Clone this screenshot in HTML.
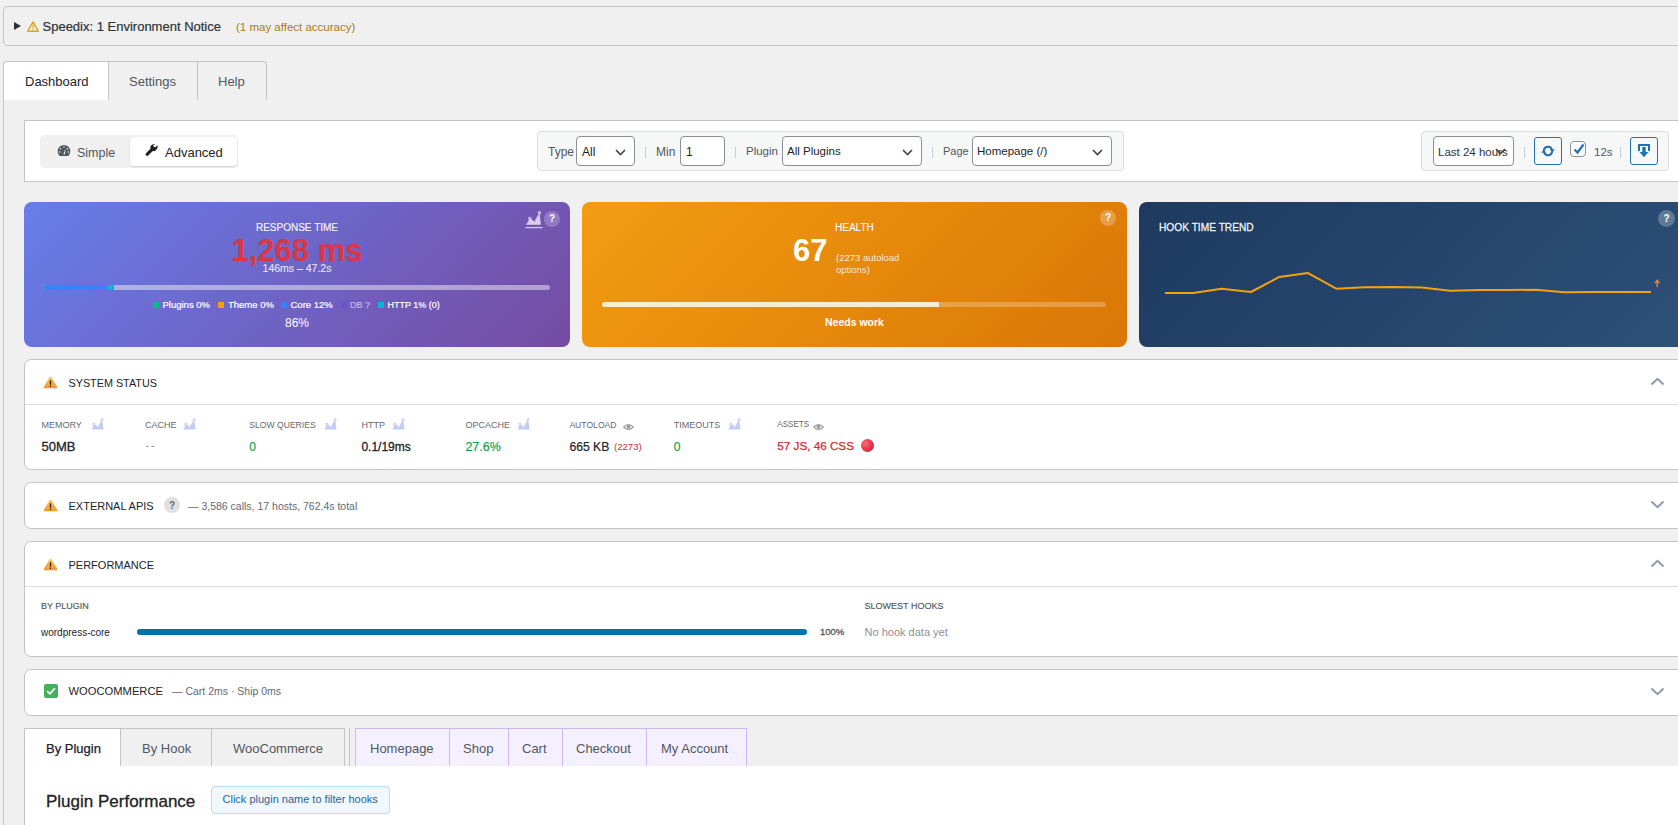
<!DOCTYPE html>
<html><head><meta charset="utf-8">
<style>
*{box-sizing:border-box}
html,body{margin:0;padding:0}
body{width:1678px;height:825px;overflow:hidden;position:relative;background:#f0f0f1;font-family:"Liberation Sans",sans-serif;color:#1d2327}
.a{position:absolute}
.t{position:absolute;white-space:nowrap;line-height:1}
/* notice */
#notice{left:3px;top:6px;width:1720px;height:40px;border:1px solid #c3c4c7;border-radius:4px}
/* tabs */
.tab{position:absolute;top:61px;height:39px;border-top:1px solid #c3c4c7;border-right:1px solid #c3c4c7;background:#f0f0f1}
/* panel */
#panel{left:24px;top:120px;width:1662px;height:62px;background:#fff;border:1px solid #c3c4c7}
.sel{position:absolute;background:#fff;border:1px solid #8c8f94;border-radius:4px}
.sep{position:absolute;width:1px;height:11px;background:#c9cedf}
.lbl{color:#50575e}
.card{position:absolute;top:202px;height:145px;width:546px;border-radius:8px;overflow:hidden}
.sec{position:absolute;left:24px;width:1662px;background:#fff;border:1px solid #c3c4c7;border-radius:7px}
.mlab{position:absolute;top:420px;font-size:9px;color:#646970;white-space:nowrap;line-height:1}
.mval{position:absolute;top:440px;font-size:12px;white-space:nowrap;line-height:1}
</style></head>
<body>

<!-- Notice -->
<div id="notice" class="a"></div>
<div class="a" style="left:14px;top:22px;width:0;height:0;border-left:7.5px solid #2c3338;border-top:4.5px solid transparent;border-bottom:4.5px solid transparent"></div>
<svg class="a" style="left:27px;top:21px" width="12" height="11" viewBox="0 0 12 11"><path d="M6 0.9 L11.2 10.2 L0.8 10.2 Z" fill="none" stroke="#dba617" stroke-width="1.4" stroke-linejoin="round"/><rect x="5.4" y="3.6" width="1.2" height="3.8" fill="#dba617"/><rect x="5.4" y="8.1" width="1.2" height="1.1" fill="#dba617"/></svg>
<div class="t" style="left:42.5px;top:20.3px;font-size:13px;-webkit-text-stroke:0.2px currentColor;color:#2c3338">Speedix: 1 Environment Notice</div>
<div class="t" style="left:236px;top:22px;font-size:11.5px;color:#a97b14">(1 may affect accuracy)</div>

<!-- Tabs -->
<div class="tab" style="left:3px;width:106px;background:#fff;border-left:1px solid #c3c4c7;border-top-left-radius:4px"></div>
<div class="tab" style="left:109px;width:89px"></div>
<div class="tab" style="left:198px;width:69px;border-top-right-radius:4px"></div>
<div class="t" style="left:25px;top:75px;font-size:13px;color:#1d2327">Dashboard</div>
<div class="t" style="left:129px;top:75px;font-size:13px;color:#50575e">Settings</div>
<div class="t" style="left:218px;top:75px;font-size:13px;color:#50575e">Help</div>
<div class="a" style="left:3px;top:100px;width:1px;height:725px;background:#c3c4c7"></div>

<!-- Filter panel -->
<div id="panel" class="a"></div>
<div class="a" style="left:40px;top:135px;width:198px;height:33px;background:#f0f0f1;border-radius:5px"></div>
<div class="a" style="left:130px;top:137px;width:107px;height:29px;background:#fff;border-radius:4px;box-shadow:0 1px 2px rgba(0,0,0,.12)"></div>
<svg class="a" style="left:57px;top:144px" width="14" height="13" viewBox="0 0 20 18"><path d="M10 1a9 9 0 0 0-9 9c0 2.7 1.2 5.2 3.1 6.8h11.8A9 9 0 0 0 19 10a9 9 0 0 0-9-9z" fill="#50575e"/><circle cx="10" cy="4" r="1.1" fill="#f0f0f1"/><circle cx="5" cy="6.5" r="1.1" fill="#f0f0f1"/><circle cx="15" cy="6.5" r="1.1" fill="#f0f0f1"/><circle cx="3.8" cy="11" r="1.1" fill="#f0f0f1"/><circle cx="16.2" cy="11" r="1.1" fill="#f0f0f1"/><path d="M9 14.5 L12.5 6 L11.2 14.8 Z" fill="#f0f0f1"/></svg>
<div class="t" style="left:77px;top:147px;font-size:12.5px;color:#50575e">Simple</div>
<svg class="a" style="left:145px;top:144px" width="14" height="14" viewBox="0 0 20 20"><path d="M16.7 7.4c1.5-1.5 1.8-3.7 1-5.5l-2.8 2.8-2.4-.7-.7-2.4L14.6.9c-1.8-.8-4-.5-5.5 1-1.3 1.3-1.7 3.2-1.3 4.9L1.4 13.2a2 2 0 0 0 0 2.8l.5.5a2 2 0 0 0 2.8 0l6.4-6.4c1.7.5 3.7.1 5.6-2.7z" fill="#1d2327"/></svg>
<div class="t" style="left:165px;top:146px;font-size:13px;color:#1d2327">Advanced</div>

<!-- middle filter group -->
<div class="a" style="left:537px;top:131px;width:587px;height:40px;background:#f6f7f7;border:1px solid #dcdcde;border-radius:4px"></div>
<div class="t lbl" style="left:548px;top:146px;font-size:12px">Type</div>
<div class="sel" style="left:576px;top:136px;width:59px;height:30px"></div>
<div class="t" style="left:582px;top:146px;font-size:12px">All</div>
<svg class="a" style="left:615px;top:148.5px" width="11" height="7" viewBox="0 0 11 7"><path d="M1 1 L5.5 5.5 L10 1" fill="none" stroke="#3c434a" stroke-width="1.6"/></svg>
<div class="sep" style="left:645px;top:147px"></div>
<div class="t lbl" style="left:656px;top:146px;font-size:12px">Min</div>
<div class="sel" style="left:680px;top:136px;width:45px;height:30px"></div>
<div class="t" style="left:686px;top:146px;font-size:12px">1</div>
<div class="sep" style="left:735px;top:147px"></div>
<div class="t lbl" style="left:746px;top:146px;font-size:11.5px">Plugin</div>
<div class="sel" style="left:782px;top:136px;width:140px;height:30px"></div>
<div class="t" style="left:787px;top:146px;font-size:11.5px">All Plugins</div>
<svg class="a" style="left:902px;top:148.5px" width="11" height="7" viewBox="0 0 11 7"><path d="M1 1 L5.5 5.5 L10 1" fill="none" stroke="#3c434a" stroke-width="1.6"/></svg>
<div class="sep" style="left:932px;top:147px"></div>
<div class="t lbl" style="left:943px;top:146px;font-size:11px">Page</div>
<div class="sel" style="left:972px;top:136px;width:140px;height:30px"></div>
<div class="t" style="left:977px;top:146px;font-size:11.5px">Homepage (/)</div>
<svg class="a" style="left:1092px;top:148.5px" width="11" height="7" viewBox="0 0 11 7"><path d="M1 1 L5.5 5.5 L10 1" fill="none" stroke="#3c434a" stroke-width="1.6"/></svg>

<!-- right group -->
<div class="a" style="left:1421px;top:131px;width:248px;height:40px;background:#f6f7f7;border:1px solid #dcdcde;border-radius:4px"></div>
<div class="sel" style="left:1433px;top:136px;width:81px;height:30px"></div>
<div class="t" style="left:1438px;top:147px;font-size:11.5px;color:#2c3338">Last 24 hours</div>
<svg class="a" style="left:1495px;top:148px" width="11" height="7" viewBox="0 0 11 7"><path d="M1 1 L5.5 5.5 L10 1" fill="none" stroke="#3c434a" stroke-width="1.6"/></svg>
<div class="sep" style="left:1524px;top:147px"></div>
<div class="a" style="left:1534px;top:137px;width:28px;height:28px;border:1.5px solid #2271b1;border-radius:3px;background:#f6f7f7"></div>
<svg class="a" style="left:1540px;top:145px" width="16" height="12" viewBox="0 0 16 12"><path d="M3.82 5.63 A4.2 4.2 0 0 1 11.95 4.56" fill="none" stroke="#2271b1" stroke-width="2"/><path d="M9.7 4.3 L14.8 4.3 L12.3 7.6 Z" fill="#2271b1"/><path d="M12.18 6.37 A4.2 4.2 0 0 1 4.05 7.44" fill="none" stroke="#2271b1" stroke-width="2"/><path d="M1.2 7.7 L6.3 7.7 L3.7 4.4 Z" fill="#2271b1"/></svg>
<div class="a" style="left:1570px;top:141px;width:16px;height:16px;border:1px solid #8c8f94;border-radius:4px;background:#fff"></div>
<svg class="a" style="left:1573px;top:143px" width="12" height="12" viewBox="0 0 12 12"><path d="M1.5 6.5 L4.5 9.5 L10.5 1.5" fill="none" stroke="#2271b1" stroke-width="2.2"/></svg>
<div class="t lbl" style="left:1594px;top:147px;font-size:11.5px">12s</div>
<div class="sep" style="left:1620px;top:147px"></div>
<div class="a" style="left:1630px;top:137px;width:28px;height:28px;border:1.5px solid #2271b1;border-radius:3px;background:#f6f7f7"></div>
<svg class="a" style="left:1638px;top:144px" width="12" height="14" viewBox="0 0 12 14"><path d="M1 7 L1 1 L11 1 L11 7" fill="none" stroke="#2271b1" stroke-width="2"/><rect x="4.3" y="3" width="3.4" height="6" fill="#2271b1"/><path d="M1.5 8 L10.5 8 L6 13.2 Z" fill="#2271b1"/></svg>

<!-- Cards -->
<div class="card" style="left:24px;background:linear-gradient(135deg,#667eea 0%,#764ba2 100%)"></div>
<div class="card" style="left:582px;width:545px;background:linear-gradient(135deg,#f39c12 0%,#d97706 100%)"></div>
<div class="card" style="left:1139px;background:linear-gradient(135deg,#1e3a5f 0%,#2d5079 100%)"></div>
<!-- card1 content -->
<svg class="a" style="left:525px;top:210px" width="18" height="19" viewBox="0 0 18 19"><path d="M1.1 14.7 L4.9 8.4 L9.5 11.2 L14.4 2.8 L15.9 14.7 Z" fill="rgba(255,255,255,.72)"/><circle cx="4.9" cy="8.4" r="1.7" fill="rgba(255,255,255,.72)"/><circle cx="14.4" cy="2.8" r="1.7" fill="rgba(255,255,255,.72)"/><circle cx="4.9" cy="8.4" r="0.6" fill="#7a5cc0"/><circle cx="9.5" cy="11.2" r="0.6" fill="#7a5cc0"/><circle cx="14.4" cy="2.8" r="0.6" fill="#7a5cc0"/><rect x="0.5" y="17" width="17" height="1.2" fill="rgba(255,255,255,.72)"/></svg>
<div class="a" style="left:544px;top:210.7px;width:16px;height:16px;border-radius:50%;background:rgba(255,255,255,.22)"></div>
<div class="t" style="left:544px;top:214px;width:16px;text-align:center;font-size:10px;font-weight:bold;color:#fff">?</div>
<div class="t" style="left:24px;top:222.5px;width:546px;text-align:center;font-size:10px;-webkit-text-stroke:0.2px currentColor;color:rgba(255,255,255,.9)">RESPONSE TIME</div>
<div class="t" style="left:24px;top:234.5px;width:546px;text-align:center;font-size:31px;font-weight:bold;color:#dc3545">1,268 ms</div>
<div class="t" style="left:24px;top:263px;width:546px;text-align:center;font-size:10.5px;-webkit-text-stroke:0.15px currentColor;color:rgba(255,255,255,.82)">146ms – 47.2s</div>
<div class="a" style="left:44px;top:285px;width:506px;height:5px;border-radius:3px;background:rgba(255,255,255,.45);overflow:hidden"><div class="a" style="left:0;top:0;width:63px;height:5px;background:#3b82f6"></div><div class="a" style="left:63px;top:0;width:7px;height:5px;background:#06b6d4"></div></div>
<div class="a" style="left:153px;top:302px;width:6px;height:6px;background:#10b981"></div>
<div class="t" style="left:162.5px;top:300.4px;font-size:9.5px;-webkit-text-stroke:0.2px currentColor;color:#fff">Plugins 0%</div>
<div class="a" style="left:218px;top:302px;width:6px;height:6px;background:#f59e0b"></div>
<div class="t" style="left:228px;top:300.4px;font-size:9.5px;-webkit-text-stroke:0.2px currentColor;color:#fff">Theme 0%</div>
<div class="a" style="left:281px;top:302px;width:6px;height:6px;background:#3b82f6"></div>
<div class="t" style="left:290.5px;top:300.4px;font-size:9.5px;-webkit-text-stroke:0.2px currentColor;color:#fff">Core 12%</div>
<div class="a" style="left:341px;top:302px;width:6px;height:6px;background:#7052c8"></div>
<div class="t" style="left:350px;top:301px;font-size:9px;-webkit-text-stroke:0.2px currentColor;color:rgba(255,255,255,.5)">DB ?</div>
<div class="a" style="left:378px;top:302px;width:6px;height:6px;background:#06b6d4"></div>
<div class="t" style="left:387.5px;top:301px;font-size:9px;-webkit-text-stroke:0.2px currentColor;color:#fff">HTTP 1% (0)</div>
<div class="t" style="left:24px;top:316.5px;width:546px;text-align:center;font-size:12px;color:#fff">86%</div>
<!-- card2 content -->
<div class="a" style="left:1100px;top:210px;width:16px;height:16px;border-radius:50%;background:rgba(255,255,255,.25)"></div>
<div class="t" style="left:1100px;top:213px;width:16px;text-align:center;font-size:10px;font-weight:bold;color:#fff">?</div>
<div class="t" style="left:835px;top:222.5px;font-size:10px;-webkit-text-stroke:0.2px currentColor;color:rgba(255,255,255,.95)">HEALTH</div>
<div class="t" style="left:793px;top:234.8px;font-size:31px;font-weight:bold;color:#fff">67</div>
<div class="t" style="left:836px;top:252px;font-size:9.5px;line-height:11.7px;color:rgba(255,255,255,.85)">(2273 autoload<br>options)</div>
<div class="a" style="left:602px;top:302px;width:504px;height:5px;border-radius:3px;background:rgba(255,255,255,.25);overflow:hidden"><div class="a" style="left:0;top:0;width:337px;height:5px;background:#fdebd0"></div></div>
<div class="t" style="left:582px;top:316.5px;width:545px;text-align:center;font-size:10.5px;font-weight:bold;color:#fff">Needs work</div>
<!-- card3 content -->
<div class="a" style="left:1658px;top:210px;width:17px;height:17px;border-radius:50%;background:rgba(255,255,255,.25)"></div>
<div class="t" style="left:1658px;top:213.5px;width:17px;text-align:center;font-size:10px;font-weight:bold;color:#fff">?</div>
<div class="t" style="left:1159px;top:222.5px;font-size:10.2px;-webkit-text-stroke:0.3px currentColor;color:rgba(255,255,255,.92)">HOOK TIME TREND</div>
<svg class="a" style="left:1139px;top:202px" width="546" height="145"><polyline fill="none" stroke="#f5a00f" stroke-width="2" stroke-linejoin="round" points="25.9,91 54.2,91 82.8,86.7 111.9,90 140.3,74.9 168.6,70.9 197.2,86.7 225.5,85.3 254.5,85 282.8,85.6 311.1,88.7 340.3,88 368.6,88 396.9,87.8 425.2,90.2 454,90 482.5,90 511.9,89.9"/><path d="M518.2 85 L518.2 78.5 M516 81 L518.2 78.3 L520.4 81" stroke="#f0883e" stroke-width="1.3" fill="none"/></svg>

<!-- sections -->
<div class="sec" style="top:359px;height:111px"></div>
<div class="sec" style="top:482px;height:47px"></div>
<div class="sec" style="top:541px;height:116px"></div>
<div class="sec" style="top:669px;height:47px"></div>
<svg class="a" style="left:43px;top:376px" width="15" height="13" viewBox="0 0 15 13"><defs><linearGradient id="wg43376" x1="0" y1="0" x2="0" y2="1"><stop offset="0" stop-color="#ffc558"/><stop offset="1" stop-color="#f7982a"/></linearGradient></defs><path d="M7.5 0.8 Q8.2 0.8 8.6 1.5 L14.3 11 Q14.8 12.2 13.5 12.2 L1.5 12.2 Q0.2 12.2 0.7 11 L6.4 1.5 Q6.8 0.8 7.5 0.8Z" fill="url(#wg43376)"/><rect x="6.8" y="4.2" width="1.4" height="4.6" rx="0.5" fill="#2b2b2b"/><rect x="6.8" y="9.6" width="1.4" height="1.4" rx="0.4" fill="#2b2b2b"/></svg><div class="t" style="left:68.5px;top:378px;font-size:10.8px;color:#1d2327">SYSTEM STATUS</div>
<svg class="a" style="left:1650px;top:377px" width="15" height="9" viewBox="0 0 15 9"><path d="M1.5 7.5 L7.5 1.8 L13.5 7.5" fill="none" stroke="#8e99aa" stroke-width="2"/></svg><div class="a" style="left:25px;top:404px;width:1660px;height:1px;background:#dcdcde"></div>
<div class="mlab" style="left:41.5px;top:420.6px;font-size:9px">MEMORY</div>
<svg class="a" style="left:90.6px;top:418px" width="14" height="12" viewBox="0 0 14 12"><path d="M0.6 11.6 L2.8 6.3 L6.9 8.3 L11.1 1.6 L12.6 11.6 Z" fill="#c5ccf4"/><circle cx="2.8" cy="6.3" r="1.5" fill="#c5ccf4"/><circle cx="11.1" cy="1.6" r="1.5" fill="#c5ccf4"/><circle cx="2.8" cy="6.6" r="0.6" fill="#fff"/><circle cx="6.9" cy="8.3" r="0.6" fill="#fff"/><circle cx="11.1" cy="1.6" r="0.6" fill="#fff"/></svg><div class="mlab" style="left:145px;top:420.6px;font-size:9px">CACHE</div>
<svg class="a" style="left:183px;top:418px" width="14" height="12" viewBox="0 0 14 12"><path d="M0.6 11.6 L2.8 6.3 L6.9 8.3 L11.1 1.6 L12.6 11.6 Z" fill="#c5ccf4"/><circle cx="2.8" cy="6.3" r="1.5" fill="#c5ccf4"/><circle cx="11.1" cy="1.6" r="1.5" fill="#c5ccf4"/><circle cx="2.8" cy="6.6" r="0.6" fill="#fff"/><circle cx="6.9" cy="8.3" r="0.6" fill="#fff"/><circle cx="11.1" cy="1.6" r="0.6" fill="#fff"/></svg><div class="mlab" style="left:249.3px;top:420.6px;font-size:8.6px">SLOW QUERIES</div>
<svg class="a" style="left:324px;top:418px" width="14" height="12" viewBox="0 0 14 12"><path d="M0.6 11.6 L2.8 6.3 L6.9 8.3 L11.1 1.6 L12.6 11.6 Z" fill="#c5ccf4"/><circle cx="2.8" cy="6.3" r="1.5" fill="#c5ccf4"/><circle cx="11.1" cy="1.6" r="1.5" fill="#c5ccf4"/><circle cx="2.8" cy="6.6" r="0.6" fill="#fff"/><circle cx="6.9" cy="8.3" r="0.6" fill="#fff"/><circle cx="11.1" cy="1.6" r="0.6" fill="#fff"/></svg><div class="mlab" style="left:361.4px;top:420.6px;font-size:9px">HTTP</div>
<svg class="a" style="left:391.7px;top:418px" width="14" height="12" viewBox="0 0 14 12"><path d="M0.6 11.6 L2.8 6.3 L6.9 8.3 L11.1 1.6 L12.6 11.6 Z" fill="#c5ccf4"/><circle cx="2.8" cy="6.3" r="1.5" fill="#c5ccf4"/><circle cx="11.1" cy="1.6" r="1.5" fill="#c5ccf4"/><circle cx="2.8" cy="6.6" r="0.6" fill="#fff"/><circle cx="6.9" cy="8.3" r="0.6" fill="#fff"/><circle cx="11.1" cy="1.6" r="0.6" fill="#fff"/></svg><div class="mlab" style="left:465.4px;top:420.6px;font-size:9px">OPCACHE</div>
<svg class="a" style="left:517px;top:418px" width="14" height="12" viewBox="0 0 14 12"><path d="M0.6 11.6 L2.8 6.3 L6.9 8.3 L11.1 1.6 L12.6 11.6 Z" fill="#c5ccf4"/><circle cx="2.8" cy="6.3" r="1.5" fill="#c5ccf4"/><circle cx="11.1" cy="1.6" r="1.5" fill="#c5ccf4"/><circle cx="2.8" cy="6.6" r="0.6" fill="#fff"/><circle cx="6.9" cy="8.3" r="0.6" fill="#fff"/><circle cx="11.1" cy="1.6" r="0.6" fill="#fff"/></svg><div class="mlab" style="left:569.4px;top:420.6px;font-size:8.6px">AUTOLOAD</div>
<svg class="a" style="left:623.0px;top:422.5px" width="11" height="8" viewBox="0 0 11 8"><path d="M0.7 4 Q5.5 -0.8 10.3 4 Q5.5 8.8 0.7 4Z" fill="none" stroke="#9a9ea3" stroke-width="1.1"/><circle cx="5.5" cy="3.8" r="2" fill="#9a9ea3"/></svg><div class="mlab" style="left:673.7px;top:420.6px;font-size:9px">TIMEOUTS</div>
<svg class="a" style="left:727.6px;top:418px" width="14" height="12" viewBox="0 0 14 12"><path d="M0.6 11.6 L2.8 6.3 L6.9 8.3 L11.1 1.6 L12.6 11.6 Z" fill="#c5ccf4"/><circle cx="2.8" cy="6.3" r="1.5" fill="#c5ccf4"/><circle cx="11.1" cy="1.6" r="1.5" fill="#c5ccf4"/><circle cx="2.8" cy="6.6" r="0.6" fill="#fff"/><circle cx="6.9" cy="8.3" r="0.6" fill="#fff"/><circle cx="11.1" cy="1.6" r="0.6" fill="#fff"/></svg><div class="mlab" style="left:777.3px;top:421.3px;font-size:8.2px;letter-spacing:-0.1px">ASSETS</div>
<svg class="a" style="left:813.0px;top:422.5px" width="11" height="8" viewBox="0 0 11 8"><path d="M0.7 4 Q5.5 -0.8 10.3 4 Q5.5 8.8 0.7 4Z" fill="none" stroke="#9a9ea3" stroke-width="1.1"/><circle cx="5.5" cy="3.8" r="2" fill="#9a9ea3"/></svg><div class="t" style="left:41.5px;top:440px;font-size:13px;font-weight:normal;-webkit-text-stroke:0.3px currentColor;color:#1d2327">50MB</div>
<div class="t" style="left:145.5px;top:440.4px;font-size:11px;font-weight:normal;letter-spacing:1.6px;color:#8c8f94">--</div>
<div class="t" style="left:249.3px;top:441px;font-size:12px;font-weight:normal;-webkit-text-stroke:0.2px currentColor;color:#16a34a">0</div>
<div class="t" style="left:361.4px;top:440.6px;font-size:12px;font-weight:normal;-webkit-text-stroke:0.3px currentColor;color:#1d2327">0.1/19ms</div>
<div class="t" style="left:465.4px;top:441.1px;font-size:12.5px;font-weight:normal;-webkit-text-stroke:0.2px currentColor;color:#16a34a">27.6%</div>
<div class="t" style="left:569.4px;top:440.6px;font-size:12.2px;font-weight:normal;-webkit-text-stroke:0.2px currentColor;color:#1d2327">665 KB</div>
<div class="t" style="left:673.7px;top:441px;font-size:12px;font-weight:normal;-webkit-text-stroke:0.2px currentColor;color:#16a34a">0</div>
<div class="t" style="left:777.3px;top:440.2px;font-size:11.7px;font-weight:normal;-webkit-text-stroke:0.25px currentColor;color:#d42b33">57 JS, 46 CSS</div>
<div class="t" style="left:614px;top:442.3px;font-size:9.6px;color:#d42b33">(2273)</div>
<div class="a" style="left:861px;top:439px;width:13px;height:13px;border-radius:50%;background:radial-gradient(circle at 35% 35%,#ff6b7a,#dd2e44 60%,#b81d32)"></div>
<svg class="a" style="left:43px;top:499px" width="15" height="13" viewBox="0 0 15 13"><defs><linearGradient id="wg43499" x1="0" y1="0" x2="0" y2="1"><stop offset="0" stop-color="#ffc558"/><stop offset="1" stop-color="#f7982a"/></linearGradient></defs><path d="M7.5 0.8 Q8.2 0.8 8.6 1.5 L14.3 11 Q14.8 12.2 13.5 12.2 L1.5 12.2 Q0.2 12.2 0.7 11 L6.4 1.5 Q6.8 0.8 7.5 0.8Z" fill="url(#wg43499)"/><rect x="6.8" y="4.2" width="1.4" height="4.6" rx="0.5" fill="#2b2b2b"/><rect x="6.8" y="9.6" width="1.4" height="1.4" rx="0.4" fill="#2b2b2b"/></svg><div class="t" style="left:68.5px;top:500.5px;font-size:11px;color:#1d2327">EXTERNAL APIS</div>
<div class="a" style="left:164px;top:497px;width:16px;height:16px;border-radius:50%;background:#e0e0e0"></div>
<div class="t" style="left:164px;top:500.5px;width:16px;text-align:center;font-size:10px;font-weight:bold;color:#646970">?</div>
<div class="t" style="left:188px;top:500.6px;font-size:10.5px;color:#646970">— 3,586 calls, 17 hosts, 762.4s total</div>
<svg class="a" style="left:1650px;top:500px" width="15" height="9" viewBox="0 0 15 9"><path d="M1.5 1.5 L7.5 7.2 L13.5 1.5" fill="none" stroke="#8e99aa" stroke-width="2"/></svg><svg class="a" style="left:43px;top:558px" width="15" height="13" viewBox="0 0 15 13"><defs><linearGradient id="wg43558" x1="0" y1="0" x2="0" y2="1"><stop offset="0" stop-color="#ffc558"/><stop offset="1" stop-color="#f7982a"/></linearGradient></defs><path d="M7.5 0.8 Q8.2 0.8 8.6 1.5 L14.3 11 Q14.8 12.2 13.5 12.2 L1.5 12.2 Q0.2 12.2 0.7 11 L6.4 1.5 Q6.8 0.8 7.5 0.8Z" fill="url(#wg43558)"/><rect x="6.8" y="4.2" width="1.4" height="4.6" rx="0.5" fill="#2b2b2b"/><rect x="6.8" y="9.6" width="1.4" height="1.4" rx="0.4" fill="#2b2b2b"/></svg><div class="t" style="left:68.5px;top:559.5px;font-size:11px;color:#1d2327">PERFORMANCE</div>
<svg class="a" style="left:1650px;top:559px" width="15" height="9" viewBox="0 0 15 9"><path d="M1.5 7.5 L7.5 1.8 L13.5 7.5" fill="none" stroke="#8e99aa" stroke-width="2"/></svg><div class="a" style="left:25px;top:586px;width:1660px;height:1px;background:#dcdcde"></div>
<div class="t" style="left:41px;top:602px;font-size:9px;-webkit-text-stroke:0.15px currentColor;color:#50575e">BY PLUGIN</div>
<div class="t" style="left:41px;top:628px;font-size:10px;color:#1d2327">wordpress-core</div>
<div class="a" style="left:137px;top:629px;width:670px;height:6px;border-radius:3px;background:#0073aa"></div>
<div class="t" style="left:820px;top:627px;font-size:9.5px;-webkit-text-stroke:0.3px currentColor;color:#50575e">100%</div>
<div class="t" style="left:864.6px;top:602px;font-size:9px;-webkit-text-stroke:0.15px currentColor;color:#50575e">SLOWEST HOOKS</div>
<div class="t" style="left:864.6px;top:626.5px;font-size:11px;color:#8c8f94">No hook data yet</div>
<svg class="a" style="left:44px;top:684px" width="14" height="14" viewBox="0 0 14 14"><rect x="0" y="0" width="14" height="14" rx="2" fill="#43b05c"/><path d="M3.2 7.2 L5.9 9.8 L10.9 4.3" fill="none" stroke="#fff" stroke-width="1.7"/></svg>
<div class="t" style="left:68.5px;top:686px;font-size:11.2px;color:#1d2327">WOOCOMMERCE</div>
<div class="t" style="left:172px;top:686px;font-size:10.5px;color:#646970">— Cart 2ms · Ship 0ms</div>
<svg class="a" style="left:1650px;top:687px" width="15" height="9" viewBox="0 0 15 9"><path d="M1.5 1.5 L7.5 7.2 L13.5 1.5" fill="none" stroke="#8e99aa" stroke-width="2"/></svg><!-- bottom tabs -->
<div class="a" style="left:24px;top:766px;width:1662px;height:70px;background:#fff;border-left:1px solid #c3c4c7"></div>
<div class="a" style="left:24px;top:728px;width:97px;height:38px;background:#fff;border:1px solid #c3c4c7;border-bottom:none"></div>
<div class="a" style="left:120px;top:728px;width:92px;height:38px;background:#f0f0f1;border:1px solid #c3c4c7;border-bottom:none"></div>
<div class="a" style="left:211px;top:728px;width:134px;height:38px;background:#f0f0f1;border:1px solid #c3c4c7;border-bottom:none"></div>
<div class="a" style="left:349px;top:728px;width:1px;height:38px;background:#c3c4c7"></div>
<div class="a" style="left:355px;top:728px;width:95px;height:38px;background:#f5f0ff;border:1px solid #cdb8f2;border-bottom:none"></div>
<div class="a" style="left:449px;top:728px;width:60px;height:38px;background:#f5f0ff;border:1px solid #cdb8f2;border-bottom:none"></div>
<div class="a" style="left:508px;top:728px;width:55px;height:38px;background:#f5f0ff;border:1px solid #cdb8f2;border-bottom:none"></div>
<div class="a" style="left:562px;top:728px;width:85px;height:38px;background:#f5f0ff;border:1px solid #cdb8f2;border-bottom:none"></div>
<div class="a" style="left:646px;top:728px;width:101px;height:38px;background:#f5f0ff;border:1px solid #cdb8f2;border-bottom:none"></div>
<div class="t" style="left:46px;top:742px;font-size:13px;-webkit-text-stroke:0.25px currentColor;color:#1d2327">By Plugin</div>
<div class="t" style="left:142px;top:742px;font-size:13px;color:#50575e">By Hook</div>
<div class="t" style="left:233px;top:742px;font-size:13px;color:#50575e">WooCommerce</div>
<div class="t" style="left:370px;top:742px;font-size:13px;color:#50575e">Homepage</div>
<div class="t" style="left:463px;top:742px;font-size:13px;color:#50575e">Shop</div>
<div class="t" style="left:522px;top:742px;font-size:13px;color:#50575e">Cart</div>
<div class="t" style="left:576px;top:742px;font-size:13px;color:#50575e">Checkout</div>
<div class="t" style="left:661px;top:742px;font-size:13px;color:#50575e">My Account</div>
<div class="t" style="left:46px;top:792.5px;font-size:17px;-webkit-text-stroke:0.3px currentColor;color:#1d2327">Plugin Performance</div>
<div class="a" style="left:211px;top:786px;width:179px;height:28px;background:#f0f8fe;border:1px solid #b8dcf5;border-radius:4px"></div>
<div class="t" style="left:222.5px;top:794.3px;font-size:11px;color:#2a6496">Click plugin name to filter hooks</div>

</body></html>
